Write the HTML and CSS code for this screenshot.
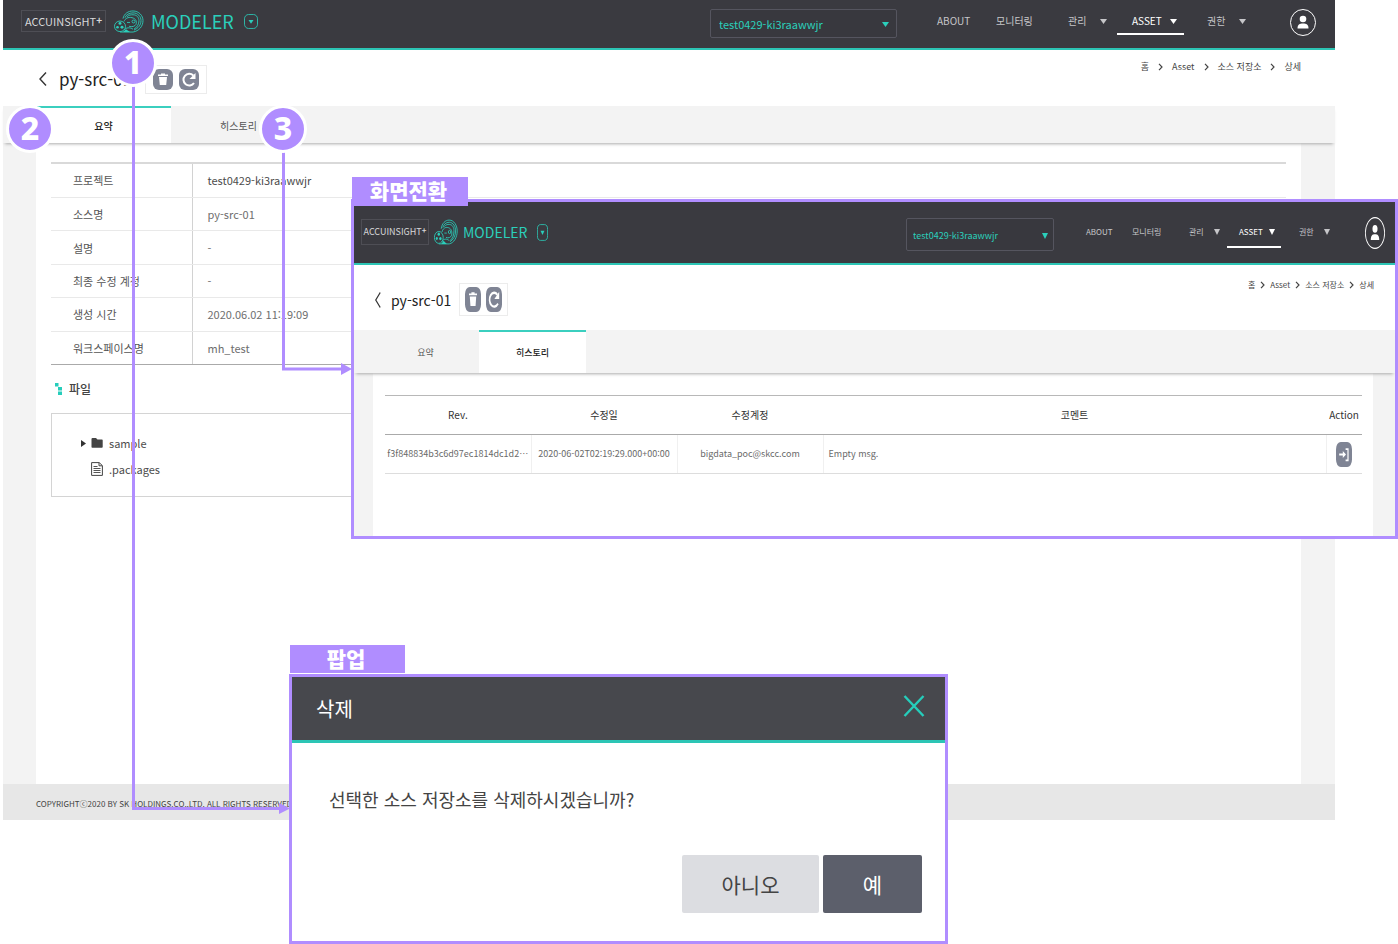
FILE: index.html
```html
<!DOCTYPE html>
<html lang="ko">
<head>
<meta charset="utf-8">
<meta name="viewport" content="width=device-width, initial-scale=1">
<title>ACCUINSIGHT+ MODELER</title>
<link rel="stylesheet" href="styles.css">
</head>
<body>
<svg class="sprite" aria-hidden="true">
  <symbol id="logo" viewBox="0 0 30 24" preserveAspectRatio="none">
    <g fill="none" stroke="currentColor" stroke-width=".9">
      <path d="M9 9C10 4 14 1 19 1c6 0 10 5 10 10 0 6-4 11-10 12H6"/>
      <path d="M11 8c1-3 4-5 8-5 5 0 8 4 8 8 0 5-3 8-7 10"/>
      <path d="M13 7c2-2 4-2 6-2 4 0 6 3 6 6 0 4-2 7-5 9"/>
      <path d="M10 12c1-3 4-5 8-4 4 1 5 4 4 7-1 2-4 3-7 2"/>
      <circle cx="6" cy="17" r="5.5"/><circle cx="19.500" cy="12" r="1.500"/>
      <path d="M10 21c2-3 6-3 9-1M13 13h3"/>
    </g>
    <g fill="currentColor"><circle cx="6" cy="14" r="1.500"/><circle cx="3.500" cy="18" r="1.300"/><circle cx="8" cy="18" r="1.500"/><path d="M9 23l3-3 4 3z"/></g>
  </symbol>
  <symbol id="drop" viewBox="0 0 14 14" preserveAspectRatio="none">
    <rect x=".5" y=".5" width="13" height="13" rx="4" fill="none" stroke="currentColor" stroke-width=".8"/>
    <path d="M4.500 5.500h5L7 9z" fill="currentColor"/>
  </symbol>
  <symbol id="caret" viewBox="0 0 7 5" preserveAspectRatio="none"><path d="M0 0h7L3.500 5z" fill="currentColor"/></symbol>
  <symbol id="user" viewBox="0 0 26 27" preserveAspectRatio="none">
    <ellipse cx="13" cy="13.500" rx="12.500" ry="13" fill="none" stroke="#fff"/>
    <circle cx="13" cy="10" r="3.300" fill="#fff"/><path d="M7.500 19.500c0-4 2-5 5.500-5s5.500 1 5.500 5z" fill="#fff"/>
  </symbol>
  <symbol id="back" viewBox="0 0 8 14" preserveAspectRatio="none"><path d="M7 .5L1 7l6 6.500" fill="none" stroke="#333" stroke-width="1.400"/></symbol>
  <symbol id="sep" viewBox="0 0 5 8" preserveAspectRatio="none"><path d="M1 .8L4 4 1 7.200" fill="none" stroke="#444" stroke-width="1.200"/></symbol>
  <symbol id="trash" viewBox="0 0 20 21" preserveAspectRatio="none">
    <rect width="20" height="21" rx="6" fill="#7f8494"/>
    <path d="M5 5.500h10v1.500H5zM8 4.500h4v1H8zM6 8h8l-.8 8H6.800z" fill="#fff"/>
  </symbol>
  <symbol id="reload" viewBox="0 0 20 21" preserveAspectRatio="none">
    <rect width="20" height="21" rx="6" fill="#7f8494"/>
    <path d="M14.300 6.500A5.800 5.800 0 1 0 15 14" fill="none" stroke="#fff" stroke-width="2"/><path d="M16.500 4v6h-6z" fill="#fff"/>
  </symbol>
  <symbol id="enter" viewBox="0 0 20 21" preserveAspectRatio="none">
    <rect width="20" height="21" rx="6" fill="#7f8494"/>
    <path d="M4 10.500h7M12 6h3v9.500h-3" fill="none" stroke="#fff" stroke-width="1.500"/><path d="M8.500 7.500l4 3-4 3z" fill="#fff"/>
  </symbol>
</svg>

<div class="board">
  <section class="screen">
    <header class="topbar">
      <a class="brand" href="#">ACCUINSIGHT<sup class="plus">+</sup></a>
      <svg class="logo"><use href="#logo"/></svg>
      <span class="product">MODELER</span>
      <button class="drop" type="button" aria-label="제품 선택"><svg><use href="#drop"/></svg></button>
      <div class="project">
        <select class="project-select" aria-label="프로젝트"><option>test0429-ki3raawwjr</option></select>
        <svg class="caret project-caret"><use href="#caret"/></svg>
      </div>
      <nav class="menu">
        <a class="menu-item" href="#">ABOUT</a>
        <a class="menu-item" href="#">모니터링</a>
        <a class="menu-item" href="#">관리<svg class="caret"><use href="#caret"/></svg></a>
        <a class="menu-item menu-item-on" href="#">ASSET<svg class="caret"><use href="#caret"/></svg></a>
        <a class="menu-item menu-item-last" href="#">권한<svg class="caret"><use href="#caret"/></svg></a>
      </nav>
      <button class="user" type="button" aria-label="사용자"><svg><use href="#user"/></svg></button>
    </header>
    <div class="titlebar">
      <a class="back" href="#" aria-label="뒤로"><svg><use href="#back"/></svg></a>
      <h1 class="title">py-src-01</h1>
      <div class="tools">
        <button class="tool" type="button" aria-label="삭제"><svg><use href="#trash"/></svg></button>
        <button class="tool" type="button" aria-label="새로고침"><svg><use href="#reload"/></svg></button>
      </div>
      <nav class="crumbs" aria-label="경로">
        <a href="#">홈</a><svg class="sep"><use href="#sep"/></svg><a href="#">Asset</a><svg class="sep"><use href="#sep"/></svg><a href="#">소스 저장소</a><svg class="sep"><use href="#sep"/></svg><span>상세</span>
      </nav>
    </div>
    <div class="tabs">
      <button class="tab tab-on" type="button">요약</button>
      <button class="tab" type="button">히스토리</button>
    </div>
    <main class="body">
      <div class="sheet">
        <table class="summary">
          <tr class="lead"><th scope="row">프로젝트</th><td>test0429-ki3raawwjr</td></tr>
          <tr><th scope="row">소스명</th><td>py-src-01</td></tr>
          <tr><th scope="row">설명</th><td>-</td></tr>
          <tr><th scope="row">최종 수정 계정</th><td>-</td></tr>
          <tr><th scope="row">생성 시간</th><td>2020.06.02 11:19:09</td></tr>
          <tr><th scope="row">워크스페이스명</th><td>mh_test</td></tr>
        </table>
        <h2 class="files-title">
          <svg class="files-mark" viewBox="0 0 7 12"><path d="M0 0h3.500v3.500H0zM3 4h4v3.500H3zM3 8.500h4V12H3z" fill="#26cdbb"/></svg>파일</h2>
        <ul class="files">
          <li class="file">
            <svg class="twist" viewBox="0 0 5 7"><path d="M0 0l5 3.500L0 7z" fill="#333"/></svg>
            <svg class="file-icon" viewBox="0 0 12 14"><path d="M.5 3q0-1 1-1h3.500l1.500 1.500H11q.7 0 .7.8V11q0 .8-.8.8H1.300Q.5 11.800.5 11z" fill="#444"/></svg>sample</li>
          <li class="file">
            <span class="twist"></span>
            <svg class="file-icon" viewBox="0 0 12 14"><path d="M.6.600h7.600l3.200 3v9.800H.6zM8 .8v3h3.200" fill="none" stroke="#444"/><path d="M2.500 4.500h4M2.500 6.500h7M2.500 8.500h7M2.500 10.500h7" stroke="#555"/></svg>.packages</li>
        </ul>
      </div>
    </main>
    <footer class="footer">COPYRIGHTⓒ2020 BY SK HOLDINGS.CO.,LTD. ALL RIGHTS RESERVED.</footer>
  </section>

  <svg class="flow" aria-hidden="true">
    <g fill="none" stroke="#b08dff" stroke-width="3"><path d="M133.500 84v724.500H281"/><path d="M283.500 150v219H343"/></g>
    <g fill="#b08dff"><path d="M279 803l11 5.500-11 5.500z"/><path d="M341 363l11 6-11 6z"/></g>
  </svg>

  <section class="screen inset">
    <header class="topbar">
      <a class="brand" href="#">ACCUINSIGHT<sup class="plus">+</sup></a>
      <svg class="logo"><use href="#logo"/></svg>
      <span class="product">MODELER</span>
      <button class="drop" type="button" aria-label="제품 선택"><svg><use href="#drop"/></svg></button>
      <div class="project">
        <select class="project-select" aria-label="프로젝트"><option>test0429-ki3raawwjr</option></select>
        <svg class="caret project-caret"><use href="#caret"/></svg>
      </div>
      <nav class="menu">
        <a class="menu-item" href="#">ABOUT</a>
        <a class="menu-item" href="#">모니터링</a>
        <a class="menu-item" href="#">관리<svg class="caret"><use href="#caret"/></svg></a>
        <a class="menu-item menu-item-on" href="#">ASSET<svg class="caret"><use href="#caret"/></svg></a>
        <a class="menu-item menu-item-last" href="#">권한<svg class="caret"><use href="#caret"/></svg></a>
      </nav>
      <button class="user" type="button" aria-label="사용자"><svg><use href="#user"/></svg></button>
    </header>
    <div class="titlebar">
      <a class="back" href="#" aria-label="뒤로"><svg><use href="#back"/></svg></a>
      <h2 class="title">py-src-01</h2>
      <div class="tools">
        <button class="tool" type="button" aria-label="삭제"><svg><use href="#trash"/></svg></button>
        <button class="tool" type="button" aria-label="새로고침"><svg><use href="#reload"/></svg></button>
      </div>
      <nav class="crumbs" aria-label="경로">
        <a href="#">홈</a><svg class="sep"><use href="#sep"/></svg><a href="#">Asset</a><svg class="sep"><use href="#sep"/></svg><a href="#">소스 저장소</a><svg class="sep"><use href="#sep"/></svg><span>상세</span>
      </nav>
    </div>
    <div class="tabs">
      <button class="tab" type="button">요약</button>
      <button class="tab tab-on" type="button">히스토리</button>
    </div>
    <div class="body">
      <div class="sheet">
        <table class="history">
          <colgroup><col class="col-fix"><col class="col-fix"><col class="col-fix"><col><col class="col-action"></colgroup>
          <thead><tr><th>Rev.</th><th>수정일</th><th>수정계정</th><th>코멘트</th><th>Action</th></tr></thead>
          <tbody><tr>
            <td>f3f848834b3c6d97ec1814dc1d2⋯</td><td>2020-06-02T02:19:29.000+00:00</td><td>bigdata_poc@skcc.com</td><td class="comment">Empty msg.</td>
            <td><button class="tool" type="button" aria-label="이동"><svg><use href="#enter"/></svg></button></td>
          </tr></tbody>
        </table>
      </div>
    </div>
  </section>
  <span class="tag tag-inset">화면전환</span>

  <section class="popup" role="dialog" aria-labelledby="popup-title">
    <header class="popup-head">
      <h2 class="popup-title" id="popup-title">삭제</h2>
      <button class="close" type="button" aria-label="닫기"><svg viewBox="0 0 22 22"><path d="M1.500 1l19 20M20.500 1l-19 20" fill="none" stroke="#26cdbb" stroke-width="2.400"/></svg></button>
    </header>
    <p class="popup-text">선택한 소스 저장소를 삭제하시겠습니까?</p>
    <div class="popup-actions">
      <button class="btn btn-no" type="button">아니오</button>
      <button class="btn btn-yes" type="button">예</button>
    </div>
  </section>
  <span class="tag tag-popup">팝업</span>

  <span class="badge badge-1">1</span>
  <span class="badge badge-2">2</span>
  <span class="badge badge-3">3</span>
</div>
</body>
</html>
```

FILE: styles.css
```css
* { box-sizing: border-box; }
body {
  margin: 0;
  background: #fff;
  color: #555;
  font-family: "Noto Sans CJK KR", "Noto Sans", sans-serif;
  font-size: 11px;
  line-height: 16px;
}
a { color: inherit; text-decoration: none; }
button { padding: 0; border: 0; background: none; font: inherit; color: inherit; cursor: pointer; }
svg { display: block; }
button > svg, .back > svg { width: 100%; height: 100%; }
.sprite { position: absolute; width: 0; height: 0; }
.board { position: relative; min-height: 944px; padding: 0 63px 0 3px; }

/* Top bar */
.topbar {
  display: flex;
  align-items: flex-start;
  height: 50px;
  padding: 0 19px 0 18px;
  background: #3a3a40;
  border-bottom: 2px solid #2cc5b5;
}
.brand {
  flex: none;
  width: 85px;
  margin-top: 10px;
  padding: 2px 0;
  border: 1px solid #4e4e55;
  color: #d8d8da;
  text-align: center;
  white-space: nowrap;
}
.plus { font-size: 10px; font-weight: 700; line-height: 0; vertical-align: 2px; }
.logo { flex: none; width: 30px; height: 23px; margin: 10px 7px 0 8px; color: #2bcfbb; }
.product { margin-top: 10px; color: #2bcfbb; font-size: 18px; line-height: 22px; }
.drop { flex: none; width: 14px; height: 15px; margin: 14px 0 0 10px; color: #2bcfbb; }
.project { position: relative; width: 187px; height: 29px; margin: 9px 40px 0 auto; }
.project-select {
  width: 100%;
  height: 100%;
  padding: 0 24px 0 8px;
  appearance: none;
  background: #38383e;
  border: 1px solid #55555f;
  border-radius: 2px;
  color: #2bcfbb;
  font: inherit;
}
.caret { flex: none; width: 7px; height: 5px; }
.project-caret { position: absolute; top: 13px; right: 8px; color: #2bcfbb; }
.menu { display: grid; grid-template-columns: 59px 72px 49px 67px 106px; color: #c6c6c9; font-size: 10px; }
.menu-item {
  display: flex;
  align-items: center;
  gap: 14px;
  height: 35px;
  padding-top: 9px;
  border-bottom: 2px solid transparent;
  white-space: nowrap;
}
.menu-item-on { gap: 8px; padding-left: 15px; border-color: #fff; color: #fff; }
.menu-item-last { padding-left: 23px; }
.user { flex: none; width: 26px; height: 27px; margin-top: 9px; }

/* Title row */
.titlebar { display: flex; align-items: center; height: 56px; padding: 2px 34px 0 36px; background: #fff; }
.back { flex: none; width: 8px; height: 14px; }
.title { margin: 0 0 0 12px; color: #222; font-size: 17px; font-weight: 400; line-height: 24px; }
.tools { display: flex; gap: 6px; margin-left: 13px; padding: 3px 7px; border: 1px solid #ececec; }
.tool { width: 20px; height: 21px; }
.crumbs { display: flex; align-items: center; gap: 9px; margin-left: auto; padding-bottom: 24px; color: #444; font-size: 9px; white-space: nowrap; }
.sep { width: 5px; height: 8px; }

/* Tabs */
.tabs { display: flex; position: relative; height: 37px; padding-left: 33px; background: #f3f3f3; box-shadow: 0 3px 3px -2px #aaa; }
.tab { width: 135px; border-top: 2px solid transparent; font-size: 10px; }
.tab-on { background: #fff; border-top-color: #3bcfbf; color: #222; font-weight: 500; }

/* Content */
.body { padding: 0 34px 0 33px; background: #f3f3f3; }
.sheet { min-height: 641px; padding: 19px 15px 0; background: #fff; }
.summary { width: 100%; height: 203px; border-collapse: collapse; border-top: 2px solid #d9d9d9; border-bottom: 1px solid #aaa; }
.summary th, .summary td { padding: 0; border-bottom: 1px solid #e9e9e9; text-align: left; }
.summary th { width: 141px; padding-left: 22px; border-right: 1px solid #d2d2d2; font-weight: 400; }
.summary td { padding-left: 15px; color: #6e6e6e; }
.summary .lead td { color: #4c4c4c; }
.summary tr:last-child > * { border-bottom-color: #aaa; }
.files-title { display: flex; align-items: center; gap: 7px; margin: 16px 0 0 4px; font-size: 12px; font-weight: 500; color: #444; }
.files-mark { width: 7px; height: 12px; }
.files { display: grid; gap: 10px; margin: 16px 0 0; padding: 21px 29px 19px; border: 1px solid #d4d4d4; list-style: none; color: #4c4c4c; }
.file { display: flex; align-items: center; }
.twist { width: 5px; height: 7px; margin-right: 5px; }
.file-icon { width: 12px; height: 14px; margin-right: 6px; }
.footer { height: 36px; padding: 12px 33px; background: #e7e7e7; font-size: 8px; line-height: 16px; color: #444; }

/* History screen shown over the page */
.inset { position: absolute; top: 199px; left: 351px; right: 0; border: 3px solid #b08dff; background: #fff; font-size: 9px; }
.inset .topbar { height: 63px; padding: 0 10px 0 7px; }
.inset .brand { width: 68px; margin-top: 17px; padding: 4px 0; }
.inset .plus { font-size: 8px; }
.inset .logo { width: 24px; height: 26px; margin: 17px 5px 0 5px; }
.inset .product { margin-top: 19px; font-size: 14px; }
.inset .drop { width: 11px; height: 17px; margin: 22px 0 0 10px; }
.inset .project { width: 148px; height: 33px; margin: 16px 32px 0 auto; }
.inset .project-select { padding: 2px 20px 0 6px; }
.inset .caret { width: 6px; height: 6px; }
.inset .project-caret { top: 15px; right: 6px; }
.inset .menu { grid-template-columns: 46px 57px 38px 54px 84px; font-size: 8px; }
.inset .menu-item { gap: 10px; height: 46px; padding-top: 16px; }
.inset .menu-item-on { gap: 6px; padding-left: 12px; }
.inset .menu-item-last { padding-left: 18px; }
.inset .user { width: 20px; height: 32px; margin-top: 15px; }
.inset .titlebar { height: 65px; padding: 4px 21px 0; }
.inset .back { width: 6px; height: 16px; }
.inset .title { margin-left: 10px; font-size: 14px; }
.inset .tools { gap: 5px; margin-left: 8px; padding: 3px 5px; }
.inset .tool { width: 16px; height: 25px; }
.inset .crumbs { gap: 5px; padding-bottom: 30px; font-size: 8px; }
.inset .tabs { height: 43px; padding-left: 18px; }
.inset .tab { width: 107px; font-size: 9px; }
.inset .body { padding: 0 22px 0 19px; }
.inset .sheet { min-height: 163px; padding: 22px 11px 0 12px; }
.history { width: 100%; table-layout: fixed; border-collapse: collapse; text-align: center; color: #6a6a6a; }
.history th, .history td { height: 39px; padding: 0; border-bottom: 1px solid #ddd; white-space: nowrap; }
.history th { border-top: 1px solid #b8b8b8; border-bottom-color: #aaa; color: #333; font-size: 10px; font-weight: 400; }
.history td + td { border-left: 1px solid #f0f0f0; }
.history .comment { padding-left: 5px; text-align: left; }
.history .tool { vertical-align: middle; }
.col-fix { width: 146px; }
.col-action { width: 36px; }

/* Delete dialog */
.popup { position: absolute; top: 674px; left: 289px; width: 659px; border: 3px solid #b08dff; background: #fff; color: #444; }
.popup-head { display: flex; align-items: center; justify-content: space-between; height: 66px; padding: 0 20px 0 24px; background: #47484d; border-bottom: 3px solid #2cc5b5; }
.popup-title { margin: 0; color: #fff; font-size: 20px; font-weight: 400; line-height: 28px; }
.close { width: 22px; height: 22px; margin-bottom: 6px; }
.popup-text { margin: 0; padding: 43px 37px 42px; font-size: 18px; line-height: 27px; }
.popup-actions { display: flex; justify-content: flex-end; gap: 4px; padding: 0 23px 28px; }
.btn { height: 58px; border-radius: 2px; font-size: 21px; }
.btn-no { width: 137px; background: #dcdde1; }
.btn-yes { width: 99px; background: #5c5f6b; color: #fff; }

/* Annotations */
.flow { position: absolute; top: 0; left: 0; width: 352px; height: 820px; pointer-events: none; }
.tag { position: absolute; height: 28px; padding-right: 3px; background: #b08dff; color: #fff; font-size: 21px; font-weight: 900; line-height: 26px; text-align: center; }
.tag-inset { top: 177px; left: 352px; width: 116px; height: 29px; }
.tag-popup { top: 645px; left: 290px; width: 115px; }
.badge {
  position: absolute;
  width: 48px;
  height: 48px;
  border: 3px solid #fff;
  border-radius: 50%;
  background: #b08dff;
  color: #fff;
  font-family: "Noto Sans", sans-serif;
  font-size: 32px;
  font-weight: 800;
  line-height: 40px;
  text-align: center;
}
.badge-1 { top: 39px; left: 109px; }
.badge-2 { top: 105px; left: 6px; }
.badge-3 { top: 105px; left: 259px; }
```
